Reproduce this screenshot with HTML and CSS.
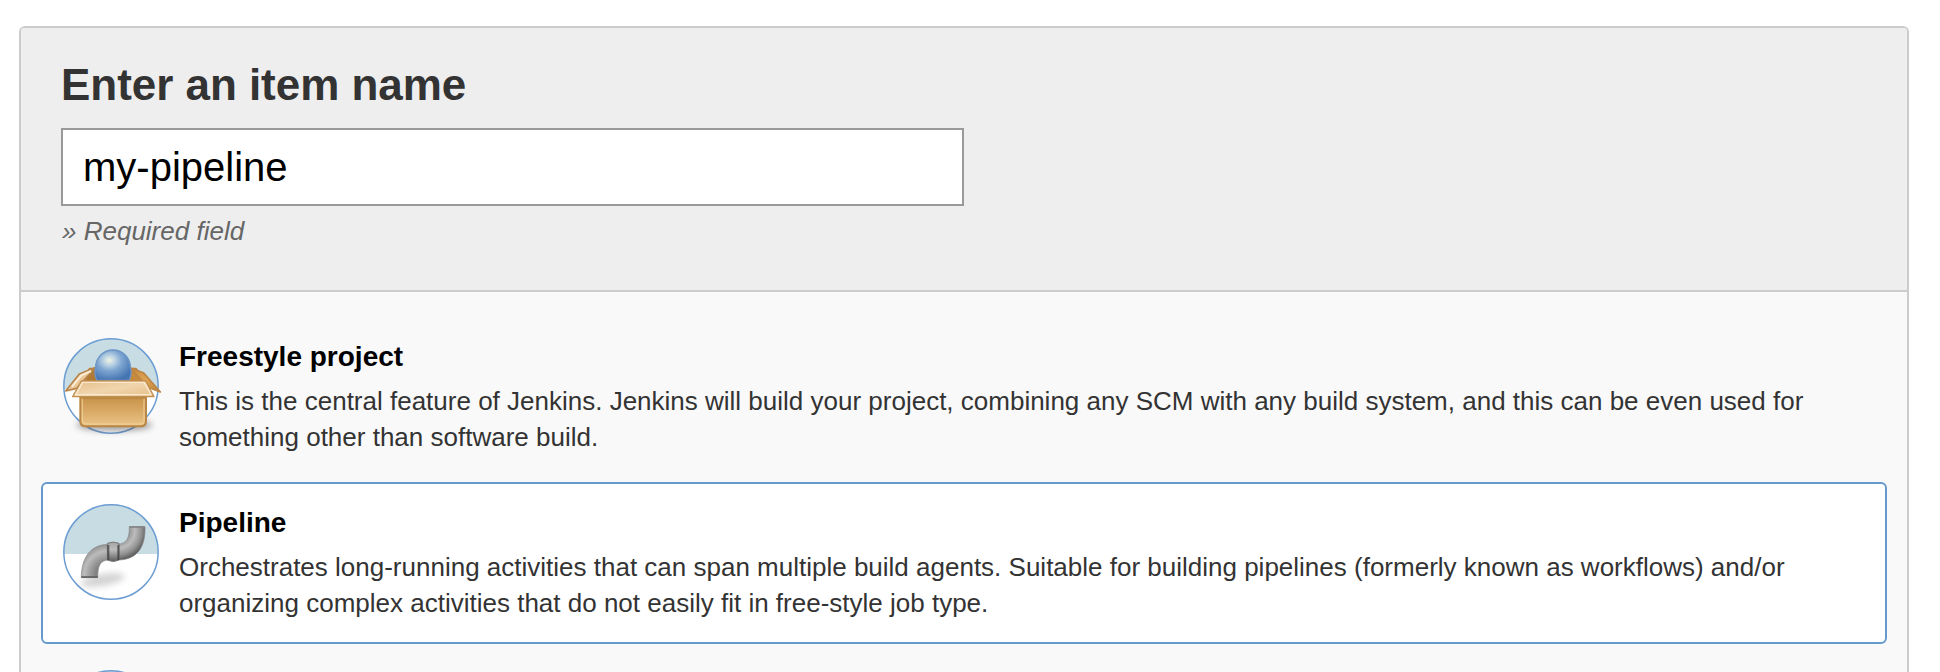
FILE: index.html
```html
<!DOCTYPE html>
<html lang="en">
<head>
<meta charset="utf-8">
<title>New Item</title>
<link rel="stylesheet" href="styles.css">
</head>
<body>
<form class="panel">
  <header class="panel-header">
    <label class="panel-title" for="name">Enter an item name</label>
    <input class="name-input" id="name" type="text" value="my-pipeline">
    <div class="hint">» Required field</div>
  </header>
  <ul class="items">
    <li class="item">
      <svg class="item-icon" viewBox="39 39 294 300" aria-hidden="true">
        <defs>
          <radialGradient id="ball" cx="0.4" cy="0.34" r="0.68">
            <stop offset="0" stop-color="#eef3e2"/>
            <stop offset="0.22" stop-color="#bfd5e4"/>
            <stop offset="0.5" stop-color="#80a7d2"/>
            <stop offset="1" stop-color="#4474b2"/>
          </radialGradient>
          <linearGradient id="front" x1="0" y1="0" x2="0" y2="1">
            <stop offset="0" stop-color="#c39149"/>
            <stop offset="0.25" stop-color="#cf9c54"/>
            <stop offset="1" stop-color="#ebc488"/>
          </linearGradient>
          <linearGradient id="flap" x1="0" y1="0" x2="1" y2="1">
            <stop offset="0" stop-color="#e6be88"/>
            <stop offset="0.5" stop-color="#f0d5ad"/>
            <stop offset="1" stop-color="#e6be86"/>
          </linearGradient>
          <linearGradient id="side" x1="0" y1="0" x2="1" y2="1">
            <stop offset="0" stop-color="#c8883a"/>
            <stop offset="0.5" stop-color="#dfa455"/>
            <stop offset="1" stop-color="#b98136"/>
          </linearGradient>
          <filter id="soft" x="-30%" y="-100%" width="160%" height="300%" color-interpolation-filters="sRGB"><feGaussianBlur stdDeviation="9"/></filter>
          <filter id="edge" x="-10%" y="-10%" width="120%" height="120%" color-interpolation-filters="sRGB"><feGaussianBlur stdDeviation="1.8"/></filter>
        </defs>
        <circle cx="183" cy="183" r="142" fill="#fff"/>
        <path d="M41.3 192A142 142 0 1 1 324.7 192Z" fill="#c8dce4"/>
        <circle cx="183" cy="183" r="141.5" fill="none" stroke="#6c9dd2" stroke-width="4.5"/>
        <ellipse cx="193" cy="300" rx="114" ry="18" fill="#444" opacity="0.5" filter="url(#soft)"/>
        <g filter="url(#edge)" stroke-linejoin="round">
          <path d="M119 130H258L290 172H88Z" fill="#c58a3c" stroke="#b58040" stroke-width="4"/>
          <path d="M119 134L144 134 138 169H108Z" fill="#b07a35"/>
          <path d="M134 128L88 147 47 198 80 190 121 144Z" fill="#e9c798" stroke="#b78549" stroke-width="5"/>
          <path d="M123 138L94 151 66 185" fill="none" stroke="#fbecd6" stroke-width="6"/>
          <path d="M244 130L280 143 331 201 294 187 257 147Z" fill="url(#side)" stroke="#bd8544" stroke-width="5"/>
          <path d="M141 166A52 52 0 0 1 137 127A52 52 0 0 1 241 127A52 52 0 0 1 237 166Z" fill="url(#ball)" stroke="#6c95c8" stroke-width="4"/>
          <path d="M91 211H288V288Q288 304 272 304H107Q91 304 91 288Z" fill="url(#front)" stroke="#b98645" stroke-width="6"/>
          <path d="M97 222V286Q97 297 109 297H270Q282 297 282 286V222" fill="none" stroke="#f0cf98" stroke-width="4" opacity="0.8"/>
          <path d="M98 219H282" stroke="#a97835" stroke-width="7" opacity="0.4"/>
          <path d="M94 168L68 215H312L287 168Z" fill="url(#flap)" stroke="#c18f50" stroke-width="4"/>
          <path d="M98 172L77 209H303L283 172Z" fill="none" stroke="#fae9cf" stroke-width="4"/>
        </g>
      </svg>
      <div class="item-text">
        <div class="item-title">Freestyle project</div>
        <div class="item-desc">This is the central feature of Jenkins. Jenkins will build your project, combining any SCM with any build system, and this can be even used for something other than software build.</div>
      </div>
    </li>
    <li class="item item-selected">
      <svg class="item-icon" viewBox="39 42 294 300" aria-hidden="true">
        <defs>
          <radialGradient id="bendLow" gradientUnits="userSpaceOnUse" cx="174" cy="254" r="94">
            <stop offset="0.3" stop-color="#747474"/>
            <stop offset="0.5" stop-color="#929292"/>
            <stop offset="0.76" stop-color="#bcbcbc"/>
            <stop offset="1" stop-color="#8c8c8c"/>
          </radialGradient>
          <radialGradient id="bendHigh" gradientUnits="userSpaceOnUse" cx="202" cy="122" r="88">
            <stop offset="0.38" stop-color="#939393"/>
            <stop offset="0.6" stop-color="#bcbcbc"/>
            <stop offset="0.82" stop-color="#929292"/>
            <stop offset="1" stop-color="#5c5c5c"/>
          </radialGradient>
          <linearGradient id="collar" x1="0" y1="0" x2="0" y2="1">
            <stop offset="0" stop-color="#a4a4a4"/>
            <stop offset="0.4" stop-color="#bdbdbd"/>
            <stop offset="1" stop-color="#5c5c5c"/>
          </linearGradient>
        </defs>
        <circle cx="183" cy="186" r="142" fill="#fff"/>
        <path d="M41.1 192A142 142 0 1 1 324.9 192Z" fill="#c8dce4"/>
        <circle cx="183" cy="186" r="141.5" fill="none" stroke="#6c9dd2" stroke-width="4.5"/>
        <ellipse cx="158" cy="270" rx="66" ry="18" fill="#777" opacity="0.32" transform="rotate(-10 158 270)" filter="url(#soft)"/>
        <g filter="url(#edge)" stroke-linejoin="round">
          <path d="M94 263C94 208 118 163 176 163V210C151 211 143 227 143 263Z" fill="url(#bendLow)" stroke="#8a8a8a" stroke-width="2"/>
          <path d="M94 261H143" stroke="#606060" stroke-width="5"/>
          <path d="M205 163C228 160 239 147 238 110H285C287 165 266 209 205 210Z" fill="url(#bendHigh)" stroke="#858585" stroke-width="2"/>
          <path d="M238 111H284" stroke="#858585" stroke-width="5"/>
          <path d="M172 160Q190 152 207 160V210Q190 219 172 210Z" fill="url(#collar)" stroke="#777" stroke-width="3"/>
          <path d="M175 165V210M205 165V210" stroke="#3c3c3c" stroke-width="6" opacity="0.75"/>
        </g>
      </svg>
      <div class="item-text">
        <div class="item-title">Pipeline</div>
        <div class="item-desc">Orchestrates long-running activities that can span multiple build agents. Suitable for building pipelines (formerly known as workflows) and/or organizing complex activities that do not easily fit in free-style job type.</div>
      </div>
    </li>
    <li class="item item-cut">
      <svg class="item-icon" viewBox="39 39 294 300" aria-hidden="true">
        <circle cx="183" cy="183" r="141.5" fill="#c8dce4" stroke="#6c9dd2" stroke-width="4.5"/>
      </svg>
    </li>
  </ul>
</form>
</body>
</html>
```
FILE: styles.css
```css
* {
  box-sizing: border-box;
}

body {
  height: 672px;
  margin: 0;
  padding: 26px 31px 0 19px;
  overflow: hidden;
  background: #fff;
  color: #333;
  font-family: "Liberation Sans", Arial, sans-serif;
}

.panel {
  height: 646px;
  border: 2px solid #ccc;
  border-bottom: 0;
  border-radius: 6px 6px 0 0;
  background: #f9f9f9;
  overflow: hidden;
}

.panel-header {
  height: 264px;
  padding: 32px 40px 0;
  border-bottom: 2px solid #ccc;
  background: #eee;
}

.panel-title {
  display: block;
  height: 50px;
  font-size: 44px;
  font-weight: bold;
  letter-spacing: -0.04px;
  line-height: 50px;
}

.name-input {
  display: block;
  width: 903px;
  height: 78px;
  margin-top: 18px;
  padding: 0 20px;
  border: 2px solid #999;
  border-radius: 0;
  outline: none;
  background: #fff;
  color: #000;
  font-family: inherit;
  font-size: 40px;
}

.hint {
  margin-top: 7px;
  padding-left: 1px;
  color: #666;
  font-size: 26px;
  font-style: italic;
  line-height: 36px;
}

.items {
  display: flex;
  flex-direction: column;
  gap: 4px;
  margin: 0;
  padding: 24px 20px 0;
  list-style: none;
}

.item {
  display: flex;
  gap: 18px;
  height: 162px;
  padding: 20px;
  border: 2px solid transparent;
  border-radius: 6px;
}

.item-selected {
  border-color: #69c;
  background: #fff;
}

.item-cut {
  height: 24px;
  padding-bottom: 0;
  border-bottom: 0;
  overflow: hidden;
}

.item-icon {
  flex: none;
  width: 98px;
  height: 100px;
}

.item-text {
  width: 1640px;
}

.item-title {
  margin-bottom: 8px;
  padding-top: 1px;
  color: #000;
  font-size: 28px;
  font-weight: bold;
  line-height: 36px;
}

.item-desc {
  font-size: 26px;
  line-height: 36px;
}
```
